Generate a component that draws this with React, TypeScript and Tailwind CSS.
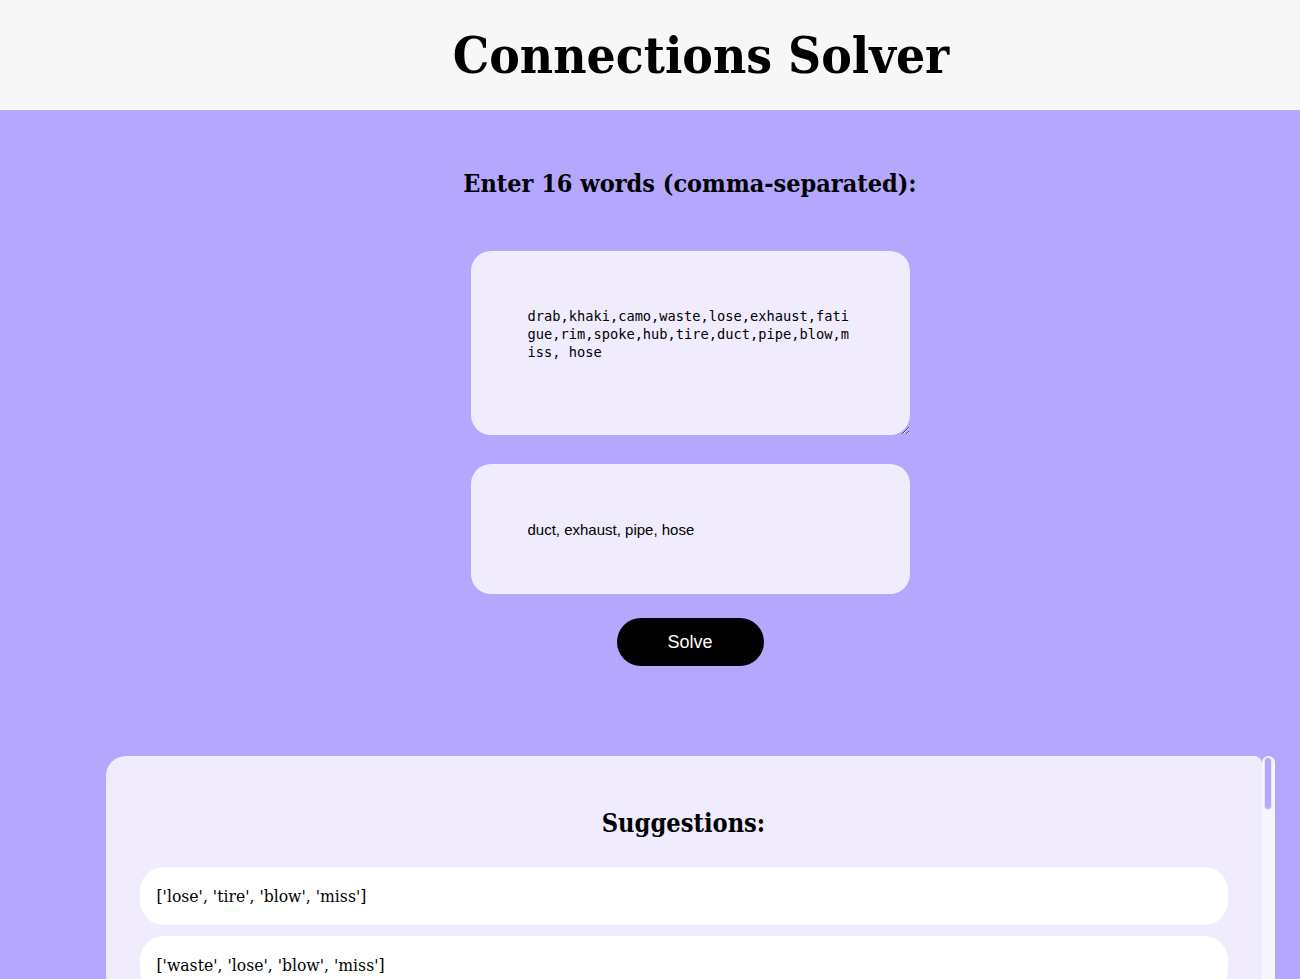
import React, { useState } from 'react';

const slab = "font-['DejaVu_Serif_Condensed','DejaVu_Serif',serif] [font-stretch:condensed]";

const suggestions: string[][] = [
  ['lose', 'tire', 'blow', 'miss'],
  ['waste', 'lose', 'blow', 'miss'],
];

const fmt = (combo: string[]) => '[' + combo.map(w => `'${w}'`).join(', ') + ']';

export default function App() {
  const [words, setWords] = useState(
    'drab,khaki,camo,waste,lose,exhaust,fatigue,rim,spoke,hub,tire,duct,pipe,blow,miss, hose'
  );
  const [known, setKnown] = useState('duct, exhaust, pipe, hose');

  return (
    <div className="h-screen overflow-hidden bg-[#b4a7fd]">
      <header className="h-[110px] bg-[#f7f7f7] flex items-center justify-center pl-[102px]">
        <h1 className={`${slab} font-bold text-[51px] leading-none text-black`}>Connections Solver</h1>
      </header>

      <main className="pl-[80px] flex flex-col items-center">
        <h2 className={`${slab} font-bold text-[25px] leading-[30px] mt-[59px] text-black`}>
          Enter 16 words (comma-separated):
        </h2>

        <textarea
          value={words}
          onChange={e => setWords(e.target.value)}
          className="mt-[52px] w-[439px] h-[184px] pl-[57px] pr-[55px] py-[56px] rounded-[20px] bg-[#f0ecfe] text-black font-['DejaVu_Sans_Mono',monospace] text-[13.7px] leading-[18px] outline-none"
        />

        <input
          type="text"
          value={known}
          onChange={e => setKnown(e.target.value)}
          className="mt-[29px] w-[439px] h-[130px] pl-[57px] pr-[55px] rounded-[20px] bg-[#f0ecfe] text-black font-['Liberation_Sans',Arial,sans-serif] text-[15px] outline-none"
        />

        <button className="mt-[24px] w-[147px] h-[48px] rounded-full bg-black text-white font-['Liberation_Sans',Arial,sans-serif] text-[18px]">
          Solve
        </button>

        <section className="mt-[90px] w-[1169px] h-[320px] flex">
          <div className="flex-1 rounded-tl-[20px] rounded-tr-[8px] bg-[#f0ecfe] px-[34px] pt-[50px] pb-[34px]">
            <h3 className={`${slab} font-bold text-[25.2px] leading-[34px] text-center text-black`}>Suggestions:</h3>
            <ul className="mt-[27px] flex flex-col gap-[11px]">
              {suggestions.map((s, i) => (
                <li
                  key={i}
                  className={`${slab} h-[58px] shrink-0 flex items-center px-[17px] rounded-[24px] bg-white text-[17.4px] text-black`}
                >
                  {fmt(s)}
                </li>
              ))}
            </ul>
          </div>
          <div className="w-[13px] bg-[#f7f5fe] rounded-t-full pt-[1px] flex justify-center">
            <div className="w-[8px] h-[53px] rounded-full bg-[#b4a7fd] border border-[#e9e5fe]" />
          </div>
        </section>
      </main>
    </div>
  );
}
